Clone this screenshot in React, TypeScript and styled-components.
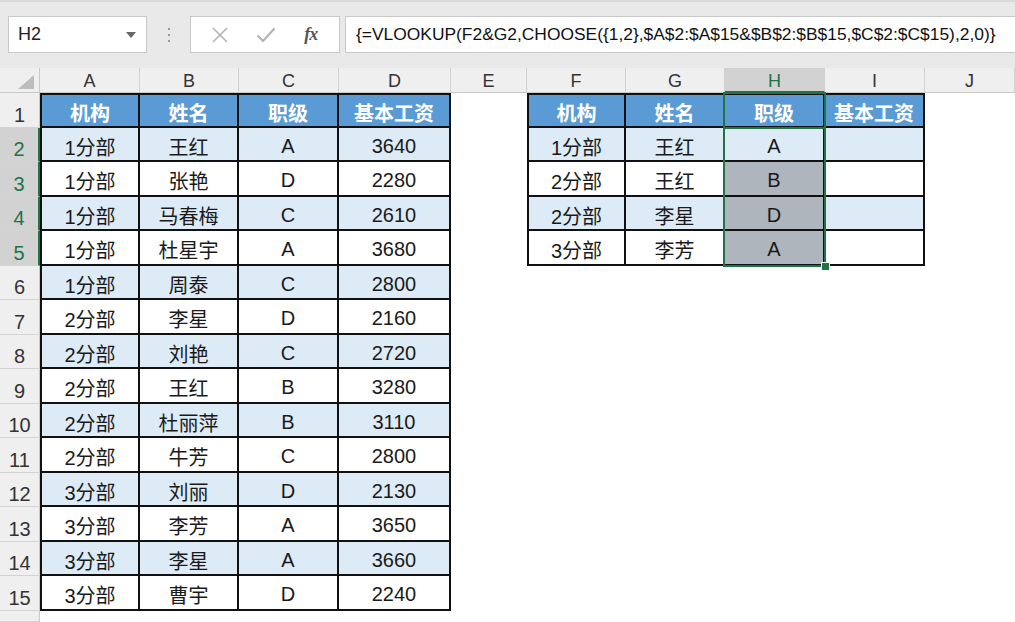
import React from "react";
import styled, { createGlobalStyle, css } from "styled-components";

const GlobalStyle = createGlobalStyle`
  html, body { margin: 0; padding: 0; background: #fff; }
  body { font-family: "Liberation Sans", "Noto Sans CJK SC", sans-serif; overflow: hidden; }
`;

const colWidths = [40, 100, 99, 100, 112, 76, 99, 99, 100, 100, 90];
const colLetters = ["A", "B", "C", "D", "E", "F", "G", "H", "I", "J"];
const ROW_H = 34.5;
const GREEN = "#217346";

const headers = ["机构", "姓名", "职级", "基本工资"];

const mainData: string[][] = [
  ["1分部", "王红", "A", "3640"],
  ["1分部", "张艳", "D", "2280"],
  ["1分部", "马春梅", "C", "2610"],
  ["1分部", "杜星宇", "A", "3680"],
  ["1分部", "周泰", "C", "2800"],
  ["2分部", "李星", "D", "2160"],
  ["2分部", "刘艳", "C", "2720"],
  ["2分部", "王红", "B", "3280"],
  ["2分部", "杜丽萍", "B", "3110"],
  ["2分部", "牛芳", "C", "2800"],
  ["3分部", "刘丽", "D", "2130"],
  ["3分部", "李芳", "A", "3650"],
  ["3分部", "李星", "A", "3660"],
  ["3分部", "曹宇", "D", "2240"],
];

const lookupData: string[][] = [
  ["1分部", "王红", "A", ""],
  ["2分部", "王红", "B", ""],
  ["2分部", "李星", "D", ""],
  ["3分部", "李芳", "A", ""],
];

const Page = styled.div`
  width: 1015px;
  height: 622px;
  overflow: hidden;
  display: flex;
  flex-direction: column;
`;

// ---- formula bar ----
const Toolbar = styled.div`
  height: 68px;
  flex: none;
  box-sizing: border-box;
  background: #e9e9e9;
  border-top: 2px solid #dadada;
  padding: 14px 0 0 8px;
  display: flex;
  align-items: flex-start;
`;

const NameBox = styled.div`
  width: 139px;
  height: 37px;
  box-sizing: border-box;
  background: #fff;
  border: 1px solid #c8c8c8;
  display: flex;
  align-items: center;
  justify-content: space-between;
  padding: 0 10px 0 9px;
  font-size: 18px;
  color: #222;
`;

const DropArrow = styled.span`
  width: 0;
  height: 0;
  border-left: 5px solid transparent;
  border-right: 5px solid transparent;
  border-top: 6px solid #666;
`;

const Grip = styled.div`
  width: 43px;
  height: 37px;
  display: flex;
  flex-direction: column;
  align-items: center;
  justify-content: center;
  gap: 4px;
`;

const GripDot = styled.span`
  width: 2px;
  height: 2px;
  background: #9a9a9a;
`;

const ButtonBox = styled.div`
  width: 150px;
  height: 37px;
  box-sizing: border-box;
  background: #fff;
  border: 1px solid #c8c8c8;
  display: flex;
  align-items: center;
  justify-content: space-around;
  padding: 0 8px 0 6px;
`;

const Fx = styled.span`
  font-family: "Liberation Serif", serif;
  font-style: italic;
  font-weight: bold;
  font-size: 18px;
  color: #555;
  letter-spacing: -1px;
`;

const FormulaBox = styled.div`
  flex: 1;
  margin-left: 5px;
  margin-right: -10px;
  height: 37px;
  box-sizing: border-box;
  background: #fff;
  border: 1px solid #c8c8c8;
  display: flex;
  align-items: center;
  padding-left: 10px;
  font-size: 17.4px;
  color: #111;
  white-space: nowrap;
  overflow: hidden;
`;

// ---- sheet grid ----
const Sheet = styled.div`
  flex: 1;
  display: grid;
  grid-template-columns: ${colWidths.map((w) => w + "px").join(" ")};
  grid-template-rows: 25px repeat(15, ${ROW_H}px) 1fr;
  background: #fff;
`;

const Corner = styled.div`
  grid-column: 1;
  grid-row: 1;
  background: #efefef;
  border-right: 1px solid #c9c9c9;
  border-bottom: 1px solid #c9c9c9;
  position: relative;
  &::after {
    content: "";
    position: absolute;
    right: 5px;
    bottom: 3px;
    width: 0;
    height: 0;
    border-left: 16px solid transparent;
    border-bottom: 14px solid #bdbdbd;
  }
`;

const ColHead = styled.div<{ $col: number; $sel?: boolean }>`
  grid-column: ${(p) => p.$col};
  grid-row: 1;
  background: ${(p) => (p.$sel ? "#d2d2d2" : "#efefef")};
  color: ${(p) => (p.$sel ? GREEN : "#333")};
  border-right: 1px solid #d0d0d0;
  border-bottom: ${(p) => (p.$sel ? `2px solid ${GREEN}` : "1px solid #c9c9c9")};
  box-sizing: border-box;
  display: flex;
  align-items: center;
  justify-content: center;
  font-size: 18px;
  padding-top: 3px;
`;

const RowHead = styled.div<{ $row: number; $sel?: boolean }>`
  grid-column: 1;
  grid-row: ${(p) => p.$row};
  background: ${(p) => (p.$sel ? "#d2d2d2" : "#efefef")};
  color: ${(p) => (p.$sel ? GREEN : "#333")};
  border-bottom: 1px solid #d4d4d4;
  border-right: ${(p) => (p.$sel ? `2px solid ${GREEN}` : "1px solid #c9c9c9")};
  box-sizing: border-box;
  display: flex;
  align-items: flex-end;
  justify-content: center;
  padding-bottom: 0;
  font-size: 20px;
`;

type CellKind = "head" | "band" | "plain" | "picked";

const cellBg: Record<CellKind, string> = {
  head: "#5b9bd5",
  band: "#ddebf7",
  plain: "#ffffff",
  picked: "#afb5bd",
};

const Cell = styled.div<{
  $col: number;
  $row: number;
  $kind: CellKind;
  $top?: boolean;
  $left?: boolean;
}>`
  grid-column: ${(p) => p.$col};
  grid-row: ${(p) => p.$row};
  background: ${(p) => cellBg[p.$kind]};
  border-right: 2px solid #111;
  border-bottom: 2px solid #111;
  ${(p) => p.$top && css`border-top: 2px solid #111;`}
  ${(p) => p.$left && css`border-left: 2px solid #111;`}
  box-sizing: border-box;
  display: flex;
  align-items: center;
  justify-content: center;
  padding-top: 5px;
  font-size: 20px;
  color: ${(p) => (p.$kind === "head" ? "#fff" : "#1a1a1a")};
  font-weight: ${(p) => (p.$kind === "head" ? "bold" : "normal")};
  white-space: nowrap;
`;

const Selection = styled.div`
  grid-column: 9;
  grid-row: 2 / span 5;
  z-index: 2;
  pointer-events: none;
  display: grid;
  grid-template-rows: ${ROW_H}px 1fr;
  margin: -1px -1px -1px -2px;
`;

const HeadOutline = styled.div`
  border: 2px solid ${GREEN};
  border-bottom: none;
`;

const RangeOutline = styled.div`
  border: 2px solid ${GREEN};
  position: relative;
`;

const FillHandle = styled.span`
  position: absolute;
  right: -6px;
  bottom: -6px;
  width: 7px;
  height: 7px;
  background: ${GREEN};
  border: 1px solid #fff;
`;

function renderTable(
  startCol: number,
  rows: string[][],
  picked?: (r: number, c: number) => boolean
) {
  const all = [headers, ...rows];
  return all.map((row, r) =>
    row.map((text, c) => {
      let kind: CellKind = r === 0 ? "head" : r % 2 === 1 ? "band" : "plain";
      if (picked && picked(r, c)) kind = "picked";
      return (
        <Cell
          key={`${startCol}-${r}-${c}`}
          $col={startCol + c}
          $row={r + 2}
          $kind={kind}
          $top={r === 0}
          $left={c === 0}
        >
          {text}
        </Cell>
      );
    })
  );
}

const XIcon = () => (
  <svg width="18" height="18" viewBox="0 0 18 18">
    <path d="M2 2 L16 16 M16 2 L2 16" stroke="#b4b4b4" strokeWidth="1.6" fill="none" />
  </svg>
);

const CheckIcon = () => (
  <svg width="20" height="16" viewBox="0 0 20 16">
    <path d="M1.5 8.5 L7 14 L18.5 1.5" stroke="#b4b4b4" strokeWidth="2.2" fill="none" />
  </svg>
);

export default function App() {
  return (
    <Page>
      <GlobalStyle />
      <Toolbar>
        <NameBox>
          <span>H2</span>
          <DropArrow />
        </NameBox>
        <Grip>
          <GripDot />
          <GripDot />
          <GripDot />
        </Grip>
        <ButtonBox>
          <XIcon />
          <CheckIcon />
          <Fx>fx</Fx>
        </ButtonBox>
        <FormulaBox>
          {"{=VLOOKUP(F2&G2,CHOOSE({1,2},$A$2:$A$15&$B$2:$B$15,$C$2:$C$15),2,0)}"}
        </FormulaBox>
      </Toolbar>
      <Sheet>
        <Corner />
        {colLetters.map((l, i) => (
          <ColHead key={l} $col={i + 2} $sel={l === "H"}>
            {l}
          </ColHead>
        ))}
        {Array.from({ length: 15 }, (_, i) => (
          <RowHead key={i} $row={i + 2} $sel={i + 1 >= 2 && i + 1 <= 5}>
            {i + 1}
          </RowHead>
        ))}
        <RowHead $row={17} />
        {renderTable(2, mainData)}
        {renderTable(7, lookupData, (r, c) => c === 2 && r >= 2)}
        <Selection>
          <HeadOutline />
          <RangeOutline>
            <FillHandle />
          </RangeOutline>
        </Selection>
      </Sheet>
    </Page>
  );
}
